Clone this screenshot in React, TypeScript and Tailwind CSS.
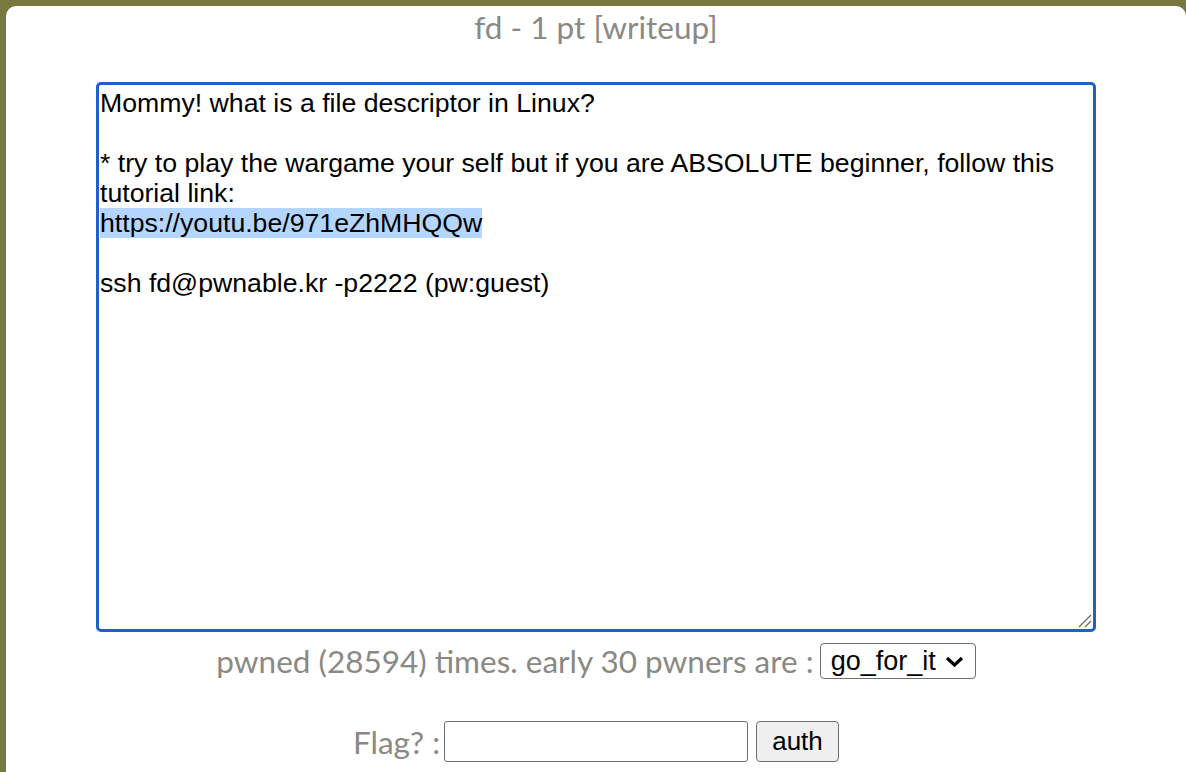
import React from "react";

export default function App() {
  const lato = { fontFamily: "Lato, 'Open Sans', sans-serif" };
  const arial = { fontFamily: "'Liberation Sans', Arial, sans-serif" };
  return (
    <div className="bg-[#797840] w-full h-[772px] overflow-hidden pt-[6px] pl-[6px]">
      <div className="bg-white rounded-[10px] h-[800px] w-full flex flex-col items-center">
        <div className="text-[31.5px] leading-[42px] text-[#8a8984]" style={lato}>
          fd - 1 pt [writeup]
        </div>
        <div
          className="relative mt-[34px] w-[1000px] h-[550px] border-[3px] border-[#2260c9] rounded-[5px] pl-[1px] pr-[1px] pt-[3px] text-[26.67px] leading-[30px] text-black whitespace-pre-wrap"
          style={arial}
        >
          <div>
            {"Mommy! what is a file descriptor in Linux?\n\n* try to play the wargame your self but if you are ABSOLUTE beginner, follow this tutorial link:\n"}
            <span className="bg-[#b4d5fe]">https://youtu.be/971eZhMHQQw</span>
            {"\n\nssh fd@pwnable.kr -p2222 (pw:guest)"}
          </div>
          <svg className="absolute right-[1px] bottom-[1px]" width="16" height="16" viewBox="0 0 16 16">
            <line x1="3" y1="15" x2="15" y2="3" stroke="#6b6b6b" strokeWidth="1.2" />
            <line x1="9" y1="15" x2="15" y2="9" stroke="#6b6b6b" strokeWidth="1.2" />
          </svg>
        </div>
        <div className="flex items-center mt-[11px]">
          <span className="text-[31.5px] leading-[36px] text-[#8a8984]" style={lato}>
            pwned (28594) times. early 30 pwners are :
          </span>
          <div
            className="ml-[6px] h-[36px] w-[156px] border border-[#6e6e6e] rounded-[4px] flex items-center gap-[9px] pl-[10px] text-[27px] text-black"
            style={arial}
          >
            <span>go_for_it</span>
            <svg width="19" height="11" viewBox="0 0 19 11">
              <path d="M2 2 L9.5 9 L17 2" fill="none" stroke="#000" strokeWidth="3.2" />
            </svg>
          </div>
        </div>
        <div className="flex items-center mt-[42px]">
          <span className="text-[31.5px] leading-[36px] text-[#8a8984]" style={lato}>
            Flag? :
          </span>
          <div className="ml-[4px] h-[41px] w-[304px] border border-[#6e6e6e] rounded-[3px]" />
          <div
            className="ml-[8px] h-[41px] w-[83px] border border-[#6e6e6e] rounded-[4px] bg-[#efefef] flex items-center justify-center text-[26px] text-black"
            style={arial}
          >
            auth
          </div>
        </div>
      </div>
    </div>
  );
}
